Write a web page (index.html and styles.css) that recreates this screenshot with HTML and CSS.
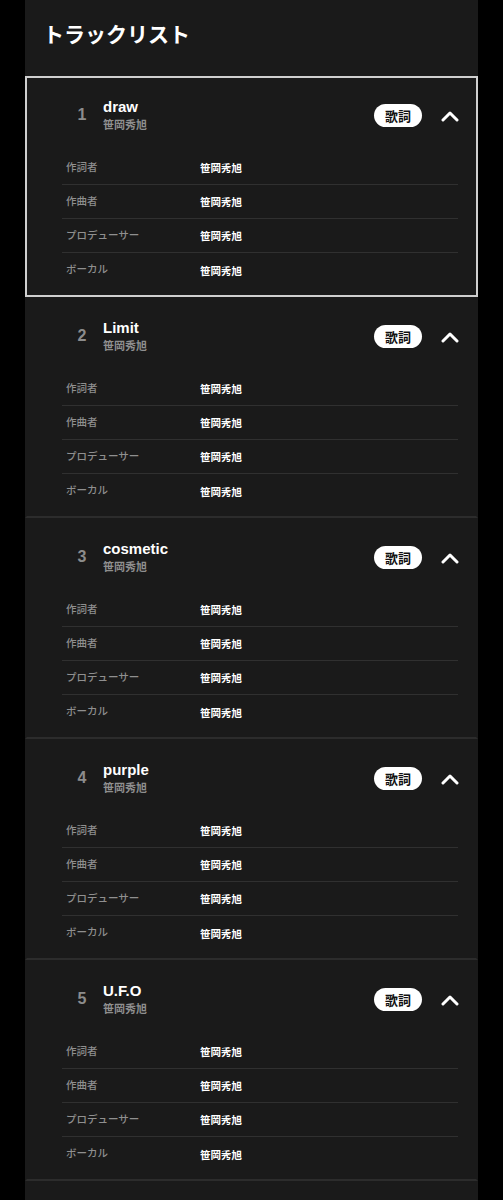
FILE: index.html
```html
<!DOCTYPE html>
<html lang="ja">
<head>
<meta charset="utf-8">
<link rel="stylesheet" href="styles.css">
</head>
<body>
<main class="panel">
  <h1 class="heading">トラックリスト</h1>
  <section class="track track--active">
    <div class="track-head">
      <span class="num">1</span>
      <div class="meta"><div class="title">draw</div><div class="artist">笹岡秀旭</div></div>
      <span class="badge">歌詞</span>
      <svg class="chev" width="18" height="12" viewBox="0 0 18 12"><polyline points="2,10 9,3 16,10" fill="none" stroke="#fff" stroke-width="3" stroke-linecap="round" stroke-linejoin="round"/></svg>
    </div>
    <div class="credits">
      <div class="row"><span class="label">作詞者</span><span class="value">笹岡秀旭</span></div>
      <div class="row"><span class="label">作曲者</span><span class="value">笹岡秀旭</span></div>
      <div class="row"><span class="label">プロデューサー</span><span class="value">笹岡秀旭</span></div>
      <div class="row"><span class="label">ボーカル</span><span class="value">笹岡秀旭</span></div>
    </div>
  </section>
  <section class="track">
    <div class="track-head">
      <span class="num">2</span>
      <div class="meta"><div class="title">Limit</div><div class="artist">笹岡秀旭</div></div>
      <span class="badge">歌詞</span>
      <svg class="chev" width="18" height="12" viewBox="0 0 18 12"><polyline points="2,10 9,3 16,10" fill="none" stroke="#fff" stroke-width="3" stroke-linecap="round" stroke-linejoin="round"/></svg>
    </div>
    <div class="credits">
      <div class="row"><span class="label">作詞者</span><span class="value">笹岡秀旭</span></div>
      <div class="row"><span class="label">作曲者</span><span class="value">笹岡秀旭</span></div>
      <div class="row"><span class="label">プロデューサー</span><span class="value">笹岡秀旭</span></div>
      <div class="row"><span class="label">ボーカル</span><span class="value">笹岡秀旭</span></div>
    </div>
  </section>
  <section class="track">
    <div class="track-head">
      <span class="num">3</span>
      <div class="meta"><div class="title">cosmetic</div><div class="artist">笹岡秀旭</div></div>
      <span class="badge">歌詞</span>
      <svg class="chev" width="18" height="12" viewBox="0 0 18 12"><polyline points="2,10 9,3 16,10" fill="none" stroke="#fff" stroke-width="3" stroke-linecap="round" stroke-linejoin="round"/></svg>
    </div>
    <div class="credits">
      <div class="row"><span class="label">作詞者</span><span class="value">笹岡秀旭</span></div>
      <div class="row"><span class="label">作曲者</span><span class="value">笹岡秀旭</span></div>
      <div class="row"><span class="label">プロデューサー</span><span class="value">笹岡秀旭</span></div>
      <div class="row"><span class="label">ボーカル</span><span class="value">笹岡秀旭</span></div>
    </div>
  </section>
  <section class="track">
    <div class="track-head">
      <span class="num">4</span>
      <div class="meta"><div class="title">purple</div><div class="artist">笹岡秀旭</div></div>
      <span class="badge">歌詞</span>
      <svg class="chev" width="18" height="12" viewBox="0 0 18 12"><polyline points="2,10 9,3 16,10" fill="none" stroke="#fff" stroke-width="3" stroke-linecap="round" stroke-linejoin="round"/></svg>
    </div>
    <div class="credits">
      <div class="row"><span class="label">作詞者</span><span class="value">笹岡秀旭</span></div>
      <div class="row"><span class="label">作曲者</span><span class="value">笹岡秀旭</span></div>
      <div class="row"><span class="label">プロデューサー</span><span class="value">笹岡秀旭</span></div>
      <div class="row"><span class="label">ボーカル</span><span class="value">笹岡秀旭</span></div>
    </div>
  </section>
  <section class="track">
    <div class="track-head">
      <span class="num">5</span>
      <div class="meta"><div class="title">U.F.O</div><div class="artist">笹岡秀旭</div></div>
      <span class="badge">歌詞</span>
      <svg class="chev" width="18" height="12" viewBox="0 0 18 12"><polyline points="2,10 9,3 16,10" fill="none" stroke="#fff" stroke-width="3" stroke-linecap="round" stroke-linejoin="round"/></svg>
    </div>
    <div class="credits">
      <div class="row"><span class="label">作詞者</span><span class="value">笹岡秀旭</span></div>
      <div class="row"><span class="label">作曲者</span><span class="value">笹岡秀旭</span></div>
      <div class="row"><span class="label">プロデューサー</span><span class="value">笹岡秀旭</span></div>
      <div class="row"><span class="label">ボーカル</span><span class="value">笹岡秀旭</span></div>
    </div>
  </section>
</main>
</body>
</html>
```

FILE: styles.css
```css
html, body {
  margin: 0;
  padding: 0;
  background: #000;
}
body {
  font-family: "Liberation Sans", "Noto Sans CJK JP", sans-serif;
  color: #fff;
}
.panel {
  width: 453px;
  margin-left: 25px;
  background: #1a1a1a;
  min-height: 1200px;
}
.heading {
  margin: 0;
  height: 76px;
  box-sizing: border-box;
  padding: 18px 0 0 18px;
  font-family: "Noto Sans CJK JP", sans-serif;
  font-size: 21px;
  line-height: 30px;
  font-weight: 700;
  color: #fff;
}
.track {
  height: 221px;
  box-sizing: border-box;
  border: 2px solid transparent;
  border-bottom-color: #2c2c2c;
}
.track--active {
  border-color: #cfcfcf;
}
.track-head {
  display: flex;
  align-items: center;
  height: 34px;
  padding: 20px 17px 0 43px;
}
.num {
  width: 24px;
  text-align: center;
  font-size: 16px;
  font-weight: 700;
  color: #8c8c8c;
  margin-right: 9px;
}
.meta {
  flex: 1;
}
.title {
  font-size: 15px;
  line-height: 18px;
  font-weight: 700;
  color: #fff;
}
.artist {
  font-family: "Noto Sans CJK JP", sans-serif;
  font-size: 11px;
  line-height: 16px;
  font-weight: 700;
  color: #8f8f8f;
}
.badge {
  width: 48px;
  height: 23px;
  border-radius: 12px;
  background: #fff;
  color: #111;
  font-family: "Noto Sans CJK JP", sans-serif;
  font-size: 13px;
  font-weight: 700;
  line-height: 23px;
  text-align: center;
  margin-right: 19px;
}
.chev {
  display: block;
  margin-top: 2px;
}
.credits {
  margin: 19px 18px 0 35px;
}
.row {
  display: flex;
  align-items: center;
  height: 34px;
  box-sizing: border-box;
  padding-left: 4px;
  border-bottom: 1px solid #303030;
  font-family: "Noto Sans CJK JP", sans-serif;
  font-size: 10.5px;
}
.row:last-child {
  border-bottom: none;
}
.label {
  width: 134px;
  color: #8f8f8f;
  font-weight: 500;
  margin-top: -3px;
}
.value {
  color: #fff;
  font-weight: 700;
}
```
